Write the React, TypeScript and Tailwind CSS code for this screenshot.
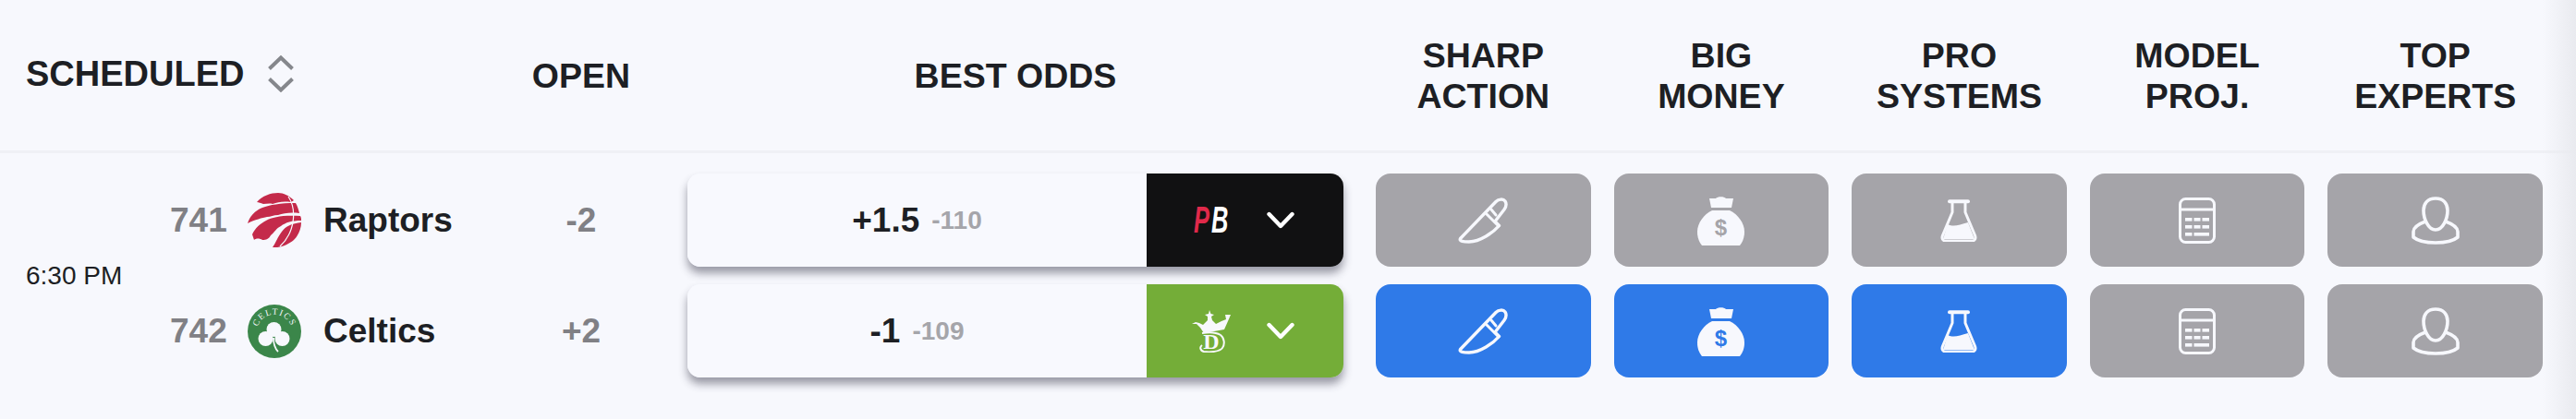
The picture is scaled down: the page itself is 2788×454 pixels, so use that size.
import React from "react";

const columns = [
  ["SHARP", "ACTION"],
  ["BIG", "MONEY"],
  ["PRO", "SYSTEMS"],
  ["MODEL", "PROJ."],
  ["TOP", "EXPERTS"],
];

const KnifeIcon = () => (
  <svg width="54" height="50" viewBox="0 0 54 50" fill="none" stroke="#f7f8fd" strokeWidth="3.4" strokeLinejoin="round" strokeLinecap="round">
    <path d="M2.5 44.5 L41 4.5 C44 1.5 49 1.2 51 4 C53 7 52 10 50 13 L40 26 L44.5 30.5 C38 38 24 48 12 48 C6 48 1 47.5 2.5 44.5 Z" />
    <path d="M31 18 L44 31 M36 13 L41 19" strokeWidth="3" />
  </svg>
);

const BagIcon = ({ cut }: { cut: string }) => (
  <svg width="51" height="54" viewBox="0 0 51 54" fill="#f7f8fd">
    <path d="M13 3 L20 3 C22 0.5 29 0.5 31 3 L39 3 L37 13 L15 13 Z" />
    <path d="M16 16 L35 16 C44 20 51 30 51 39 C51 46 49 50 46 54 L5 54 C2 50 0 46 0 39 C0 30 7 20 16 16 Z" />
    <text x="25.5" y="43" textAnchor="middle" fontSize="24" fontWeight="700" fill={cut} className="font-['Liberation_Sans',sans-serif]">
      $
    </text>
  </svg>
);

const FlaskIcon = () => (
  <svg width="40" height="46" viewBox="0 0 40 46" fill="none" stroke="#f7f8fd" strokeWidth="3">
    <path d="M13 3 V14 L2.5 39 C1 43 3 45 6 45 H34 C37 45 39 43 37.5 39 L27 14 V3" strokeLinejoin="round" />
    <path d="M10 2.2 H30" strokeWidth="4" strokeLinecap="round" />
    <path d="M8 27 C14 30 20 28 30 25 L37 43 H3 Z" fill="#f7f8fd" stroke="none" />
  </svg>
);

const CalcIcon = () => (
  <svg width="40" height="50" viewBox="0 0 40 50" fill="none" stroke="#f7f8fd" strokeWidth="3">
    <rect x="1.5" y="1.5" width="37" height="47" rx="6" />
    <path d="M1.5 13 H38.5" />
    <g fill="#f7f8fd" stroke="none">
      <rect x="7" y="22" width="7.5" height="3.6" />
      <rect x="16.5" y="22" width="7" height="3.6" />
      <rect x="25.5" y="22" width="7.5" height="3.6" />
      <rect x="7" y="30" width="7.5" height="3.6" />
      <rect x="16.5" y="30" width="7" height="3.6" />
      <rect x="25.5" y="30" width="7.5" height="3.6" />
      <rect x="7" y="38" width="7.5" height="3.6" />
      <rect x="16.5" y="38" width="16.5" height="3.6" />
    </g>
  </svg>
);

const PersonIcon = () => (
  <svg width="52" height="52" viewBox="0 0 52 52" fill="none" stroke="#f7f8fd" strokeWidth="3.6" strokeLinejoin="round">
    <path d="M26 2 C17 2 13 8 13 15 C13 24 18 36 26 36 C34 36 39 24 39 15 C39 8 35 2 26 2 Z" />
    <path d="M15 27 C7 30 2 33 2 38 L2 44 C8 49 18 50 26 50 C34 50 44 49 50 44 L50 38 C50 33 45 30 37 27" />
  </svg>
);

const RaptorsLogo = () => (
  <svg width="58" height="59" viewBox="0 0 58 59" fill="#c42a4a">
    <path d="M10 10 C16 3 25 0 33 0 C39 0 45 3 50 8 L47 10 C38 9 33 10 27 12 C24 11 20 12 17 12 C14 11 12 10 10 10 Z" />
    <path d="M0 33 C2 26 8 19 16 16 C24 13 35 11 52 11 C54 14 55 18 56 22 C46 21 39 22 33 24 C28 24 25 26 21 26 C16 27 8 29 0 33 Z" />
    <path d="M5 45 C8 38 14 33 20 30 C27 26 38 24 57 25 C58 27 58 28 58 30 C48 30 41 32 36 36 C31 38 29 43 25 46 C23 50 20 51 16 51 C13 49 9 49 7 51 Z" />
    <path d="M27 59 C31 53 33 47 37 42 C41 36 48 33 58 32 C58 39 55 46 50 51 C44 56 35 60 27 59 Z" />
    <path d="M44 4 C53 17 52 42 35 58" fill="none" stroke="#f7f8fd" strokeWidth="1.2" />
  </svg>
);

const CelticsLogo = () => (
  <svg width="58" height="58" viewBox="0 0 58 58">
    <circle cx="29" cy="29" r="29" fill="#3b864a" />
    <defs>
      <path id="celtics-arc" d="M10.5 34 A19 19 0 1 1 47.5 34" />
    </defs>
    <text fontSize="9.5" fill="#f7f8fd" letterSpacing="1.5" className="font-['Liberation_Serif',serif]">
      <textPath href="#celtics-arc" startOffset="50%" textAnchor="middle">
        CELTICS
      </textPath>
    </text>
    <g fill="#f7f8fd">
      <circle cx="28.5" cy="27" r="8" />
      <circle cx="19.5" cy="37" r="8" />
      <circle cx="37.5" cy="37" r="8" />
    </g>
    <path d="M28 36 C28 43 30 48 33 51" fill="none" stroke="#f7f8fd" strokeWidth="1.8" />
  </svg>
);

// squeezed italics, the sportsbook mark is a tall condensed wordmark
const PbLogo = () => (
  <span className="flex text-[41px] font-bold italic leading-none">
    <span className="w-[19px] origin-left scale-x-[0.62] text-[#e0294a]">P</span>
    <span className="w-[19px] origin-left scale-x-[0.62] text-white">B</span>
  </span>
);

const DkLogo = () => (
  <svg width="42" height="46" viewBox="0 0 42 46" fill="#f7f8fd">
    <path d="M19 0 L20.5 4 L24 5 L21 7 L22 11 L26 15 L32 12 L37 10 L36 5 L42 5 L39 12 L35 21 L13 25 L9 19 L5 15 L0 15 L4 13 L8 14 L12 16 L17 11 L17 7 L14 5 L18 4 Z" />
    <text x="21" y="42" textAnchor="middle" fontSize="24" fontWeight="700" className="font-['Liberation_Serif',serif]">
      D
    </text>
    <path d="M11 25 C17 24 26 24 31 27 C35 30 36 37 33 41 C30 45 20 46 13 45 C9 44 8 40 11 38" fill="none" stroke="#f7f8fd" strokeWidth="2" />
  </svg>
);

const Chevron = () => (
  <svg width="30" height="19" viewBox="0 0 30 19" fill="none" stroke="#ffffff" strokeWidth="4.4" strokeLinecap="round" strokeLinejoin="round">
    <path d="M2.5 3 L15 16 L27.5 3" />
  </svg>
);

const SortIcon = () => (
  <svg width="28" height="40" viewBox="0 0 28 40" fill="none" stroke="#85878c" strokeWidth="4">
    <path d="M1.5 14.5 L14 2.5 L26.5 14.5 M1.5 25.5 L14 37.5 L26.5 25.5" />
  </svg>
);

const rows = [
  {
    num: "741",
    team: "Raptors",
    logo: <RaptorsLogo />,
    open: "-2",
    odds: "+1.5",
    juice: "-110",
    book: <PbLogo />,
    bookBg: "bg-[#111112]",
    active: false,
  },
  {
    num: "742",
    team: "Celtics",
    logo: <CelticsLogo />,
    open: "+2",
    odds: "-1",
    juice: "-109",
    book: <DkLogo />,
    bookBg: "bg-[#74ad38]",
    active: true,
  },
];

const App = () => {
  return (
    <div className="relative min-h-[454px] w-full overflow-hidden bg-[#f7f8fd] font-['Liberation_Sans',Arial,sans-serif] text-[#1d1f24]">
      {/* header */}
      <div className="flex h-[166px] items-center border-b-[3px] border-[#eff0f5] pl-[28px] text-[37.5px] font-bold leading-[44px]">
        <div className="flex w-[516px] -translate-y-[2px] items-center text-[38px]">
          <span>SCHEDULED</span>
          <span className="ml-[26px]">
            <SortIcon />
          </span>
        </div>
        <div className="w-[170px] text-center">OPEN</div>
        <div className="ml-[30px] w-[710px] text-center">BEST ODDS</div>
        <div className="ml-[35px] flex gap-[25px]">
          {columns.map((col) => (
            <div key={col[0]} className="w-[232.6px] text-center">
              {col[0]}
              <br />
              {col[1]}
            </div>
          ))}
        </div>
      </div>

      {/* game */}
      <div className="flex pl-[28px] pt-[22px]">
        <div className="flex w-[156px] items-center text-[28px]">6:30 PM</div>
        <div className="flex flex-col gap-[19px]">
          {rows.map((row) => (
            <div key={row.num} className="flex h-[101px] items-center">
              <div className="flex w-[360px] items-center">
                <span className="w-[84px] text-[37px] font-bold text-[#808085]">{row.num}</span>
                <span className="w-[58px]">{row.logo}</span>
                <span className="ml-[24px] text-[37px] font-bold">{row.team}</span>
              </div>
              <div className="w-[170px] text-center text-[37px] font-bold text-[#808085]">{row.open}</div>

              <div className="ml-[30px] flex h-[101px] w-[710px] overflow-hidden rounded-[14px] shadow-[0_7px_10px_rgba(40,40,60,0.45)]">
                <div className="flex w-[497px] items-center justify-center bg-[#f8f9fe]">
                  <span className="text-[37px] font-bold">{row.odds}</span>
                  <span className="ml-[13px] text-[28px] font-bold text-[#a5a5aa]">{row.juice}</span>
                </div>
                <div className={`flex flex-1 items-center pl-[49px] ${row.bookBg}`}>
                  <span className="flex w-[42px] justify-center">{row.book}</span>
                  <span className="ml-[39px]">
                    <Chevron />
                  </span>
                </div>
              </div>

              <div className="ml-[35px] flex gap-[25px]">
                <div className={`flex h-[101px] w-[232.6px] items-center justify-center rounded-[16px] ${row.active ? "bg-[#2f7ae8]" : "bg-[#a5a4a9]"}`}>
                  <KnifeIcon />
                </div>
                <div className={`flex h-[101px] w-[232.6px] items-center justify-center rounded-[16px] ${row.active ? "bg-[#2f7ae8]" : "bg-[#a5a4a9]"}`}>
                  <BagIcon cut={row.active ? "#2f7ae8" : "#a5a4a9"} />
                </div>
                <div className={`flex h-[101px] w-[232.6px] items-center justify-center rounded-[16px] ${row.active ? "bg-[#2f7ae8]" : "bg-[#a5a4a9]"}`}>
                  <FlaskIcon />
                </div>
                <div className="flex h-[101px] w-[232.6px] items-center justify-center rounded-[16px] bg-[#a5a4a9]">
                  <CalcIcon />
                </div>
                <div className="flex h-[101px] w-[232.6px] items-center justify-center rounded-[16px] bg-[#a5a4a9]">
                  <PersonIcon />
                </div>
              </div>
            </div>
          ))}
        </div>
      </div>

      {/* edge shade over the table */}
      <div className="absolute right-0 top-0 h-full w-[36px] bg-linear-to-r from-transparent to-[#e9eaef]" />
    </div>
  );
};

export default App;
